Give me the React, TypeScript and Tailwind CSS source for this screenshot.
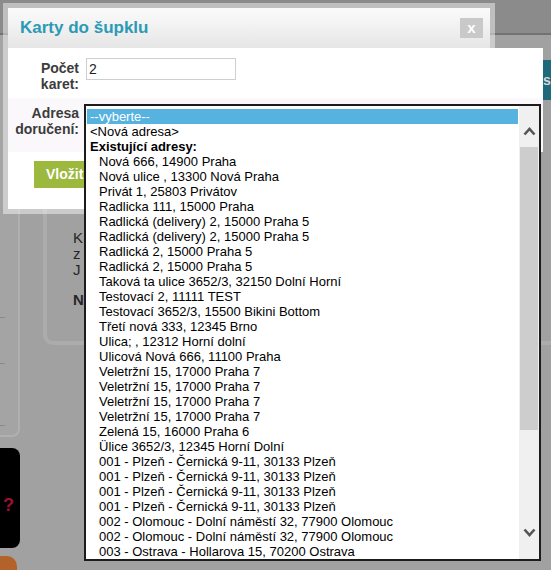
import type { ReactNode } from "react";

const addresses = [
	"Nová 666, 14900 Praha",
	"Nová ulice , 13300 Nová Praha",
	"Privát 1, 25803 Privátov",
	"Radlicka 111, 15000 Praha",
	"Radlická (delivery) 2, 15000 Praha 5",
	"Radlická (delivery) 2, 15000 Praha 5",
	"Radlická 2, 15000 Praha 5",
	"Radlická 2, 15000 Praha 5",
	"Taková ta ulice 3652/3, 32150 Dolní Horní",
	"Testovací 2, 11111 TEST",
	"Testovací 3652/3, 15500 Bikini Bottom",
	"Třetí nová 333, 12345 Brno",
	"Ulica; , 12312 Horní dolní",
	"Ulicová Nová 666, 11100 Praha",
	"Veletržní 15, 17000 Praha 7",
	"Veletržní 15, 17000 Praha 7",
	"Veletržní 15, 17000 Praha 7",
	"Veletržní 15, 17000 Praha 7",
	"Zelená 15, 16000 Praha 6",
	"Ülice 3652/3, 12345 Horní Dolní",
	"001 - Plzeň - Černická 9-11, 30133 Plzeň",
	"001 - Plzeň - Černická 9-11, 30133 Plzeň",
	"001 - Plzeň - Černická 9-11, 30133 Plzeň",
	"001 - Plzeň - Černická 9-11, 30133 Plzeň",
	"002 - Olomouc - Dolní náměstí 32, 77900 Olomouc",
	"002 - Olomouc - Dolní náměstí 32, 77900 Olomouc",
	"003 - Ostrava - Hollarova 15, 70200 Ostrava",
];

function Chevron({ up }: { up?: boolean }) {
	return (
		<svg width="13" height="9" viewBox="0 0 13 9" className="mx-auto block">
			<polyline
				points={up ? "1.5,7.5 6.5,2 11.5,7.5" : "1.5,1.5 6.5,7 11.5,1.5"}
				fill="none"
				stroke="#555"
				strokeWidth="2.6"
			/>
		</svg>
	);
}

function Option({ children, sub, bold }: { children: ReactNode; sub?: boolean; bold?: boolean }) {
	return (
		<div
			className={`h-[15px] text-[13px] leading-[15px] whitespace-nowrap text-black ${sub ? "pl-[12px]" : "pl-[3px]"} ${bold ? "font-bold" : ""}`}
		>
			{children}
		</div>
	);
}

export default function App() {
	return (
		<div className="relative w-[551px] h-[570px] overflow-hidden bg-[#a1a1a1] font-['Liberation_Sans',Arial,sans-serif]">
			{/* dimmed page behind the dialog */}
			<div className="h-[35px] bg-[#8b8b8b] border-b-2 border-[#727272]" />
			<div className="flex">
				<div className="w-[22px] flex flex-col">
					<div className="w-[20px] h-[402px] bg-[#a4a4a4] border-r-2 border-b-2 border-[#b0b0b0] rounded-br-[8px] flex flex-col">
						<div className="mt-[282px] w-[5px] h-[1px] bg-[#8a8a8a]" />
						<div className="mt-[45px] w-[5px] h-[1px] bg-[#8a8a8a]" />
						<div className="mt-[61px] w-[5px] h-[1px] bg-[#8a8a8a]" />
					</div>
					<div className="mt-[11px] h-[100px] bg-black rounded-r-[8px] flex items-center pl-[3px] pt-[14px]">
						<span className="text-[18px] font-bold text-[#9c1030]">?</span>
					</div>
					<div className="mt-[8px] w-[17px] h-[20px] bg-[#b3622c] rounded-tr-[10px]" />
				</div>
				<div className="ml-[23px] w-[520px] h-[310px] shrink-0 bg-[#a1a1a1] border-4 border-t-0 border-[#acacac] rounded-bl-[10px]">
					<div className="ml-[494px] mt-[25px] h-[40px] w-[60px] bg-[#1e6a7a] pl-[2px] flex items-center text-[14px] font-bold text-[#d8d8d8]">
						si
					</div>
					<div className="mt-[130px] pl-[26px] text-[15px] leading-[16px] text-[#262626]">
						<div>K</div>
						<div>z</div>
						<div>J</div>
						<div className="mt-[14px] font-bold">N</div>
					</div>
				</div>
			</div>

			{/* dialog */}
			<div className="absolute left-[3px] top-[3px] w-[492px] border-[5px] border-[rgba(255,255,255,0.45)] bg-white bg-clip-padding">
				<div className="h-[40px] bg-gradient-to-b from-[#fbfbfb] to-[#e6e6e6] flex items-center justify-between pl-[12px] pr-[7px]">
					<span className="text-[17px] font-bold text-[#2b9ab6]">Karty do šupklu</span>
					<button
						type="button"
						className="w-[23px] h-[20px] bg-[#c9c9c9] text-white text-[15px] font-bold leading-none flex items-center justify-center pb-[2px]"
					>
						x
					</button>
				</div>
				<div className="w-[535px]">
					<div className="h-[50px] bg-white flex items-start pt-[10px]">
						<div className="w-[73px] pr-[2px] pt-[2px] text-right text-[14px] leading-[16px] font-bold text-[#3c3c3c]">
							Počet
							<br />
							karet:
						</div>
						<input
							readOnly
							value="2"
							className="ml-[5px] w-[150px] h-[22px] border border-[#cfcfcf] px-[2px] text-[14px] text-[#222] outline-none"
						/>
					</div>
					<div className="h-[54px] bg-[#fbf8fb] flex items-start pt-[7px]">
						<div className="w-[73px] pr-[2px] text-right text-[14px] leading-[16px] font-bold text-[#3c3c3c] whitespace-nowrap">
							Adresa
							<br />
							doručení:
						</div>
					</div>
				</div>
				<div className="pt-[9px] pb-[21px] pl-[26px]">
					<button
						type="button"
						className="h-[27px] px-[12px] bg-[#9cb83d] text-white text-[14px] font-bold flex items-center"
					>
						Vložit
					</button>
				</div>
			</div>

			{/* open select list */}
			<div className="absolute left-[84px] top-[104px] w-[457px] h-[457px] border-2 border-[#1c1c1c] bg-white flex">
				<div className="flex-1 overflow-hidden pt-[3px] px-[1px]">
					<div className="h-[15px] pl-[3px] bg-[#56b2df] text-white text-[13px] leading-[15px]">--vyberte--</div>
					<Option>&lt;Nová adresa&gt;</Option>
					<Option bold>Existující adresy:</Option>
					{addresses.map((a, i) => (
						<Option key={i} sub>
							{a}
						</Option>
					))}
				</div>
				<div className="w-[20px] bg-[#f0f0f0] flex flex-col">
					<div className="h-[41px] pt-[21px]">
						<Chevron up />
					</div>
					<div className="h-[283px] mx-[1px] bg-[#cdcdcd]" />
					<div className="flex-1 flex flex-col justify-end pb-[22px]">
						<Chevron />
					</div>
				</div>
			</div>
		</div>
	);
}
